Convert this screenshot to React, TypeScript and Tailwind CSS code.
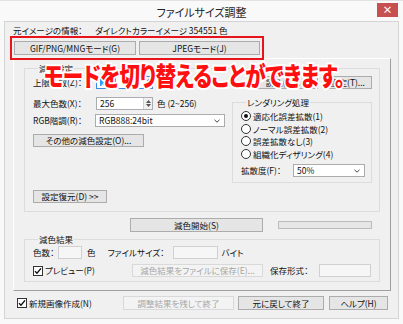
import type { ReactNode } from "react";

function Btn({ children, className = "", disabled = false }: { children: ReactNode; className?: string; disabled?: boolean }) {
  return (
    <div
      className={`flex h-[13px] items-center justify-center border ${
        disabled ? "border-[#d9d9d9] bg-[#f3f3f3] text-[#a6a6a6]" : "border-[#acacac] bg-[#e5e5e5] text-[#111]"
      } ${className}`}
    >
      {children}
    </div>
  );
}

function Box({ className = "" }: { className?: string }) {
  return <div className={`h-[13px] border border-[#d0d0d0] bg-[#f6f6f6] ${className}`} />;
}

function Check() {
  return (
    <div className="flex h-[10px] w-[10px] items-center justify-center border border-[#333] bg-white">
      <svg width="8" height="8" viewBox="0 0 8 8">
        <path d="M1 4.2 L3 6.3 L7 1.4" fill="none" stroke="#111" strokeWidth="1.4" />
      </svg>
    </div>
  );
}

function Radio({ label, on = false }: { label: string; on?: boolean }) {
  return (
    <div className="flex h-[12.5px] items-center gap-[2px]">
      <div className="flex h-[10px] w-[10px] items-center justify-center rounded-full border border-[#333] bg-white">
        {on && <div className="h-[4px] w-[4px] rounded-full bg-[#111]" />}
      </div>
      <span>{label}</span>
    </div>
  );
}

function Select({ value, className = "" }: { value: string; className?: string }) {
  return (
    <div className={`flex h-[13px] items-center justify-between border border-[#acacac] bg-white pl-[3px] pr-[4px] ${className}`}>
      <span>{value}</span>
      <svg width="6" height="4" viewBox="0 0 6 4">
        <path d="M0.5 0.8 L3 3.2 L5.5 0.8" fill="none" stroke="#444" strokeWidth="1" />
      </svg>
    </div>
  );
}

function Spin({ value, className = "", focused = false }: { value: string; className?: string; focused?: boolean }) {
  return (
    <div className={`flex h-[13px] items-center justify-between border bg-white pl-[3px] ${focused ? "border-[#3c8be0]" : "border-[#abadb3]"} ${className}`}>
      {focused ? <span className="bg-[#3399ff] px-[1px] text-white">{value}</span> : <span>{value}</span>}
      <div className="flex h-full w-[9px] flex-col items-center justify-center gap-[1px] border-l border-[#d0d0d0] bg-[#f0f0f0]">
        <svg width="5" height="3" viewBox="0 0 5 3"><path d="M0 3 L2.5 0 L5 3 Z" fill="#555" /></svg>
        <svg width="5" height="3" viewBox="0 0 5 3"><path d="M0 0 L2.5 3 L5 0 Z" fill="#555" /></svg>
      </div>
    </div>
  );
}

function Group({ title, className = "", children }: { title: string; className?: string; children: ReactNode }) {
  return (
    <div className={`border border-[#dcdcdc] ${className}`}>
      <div className="-mt-[7px] ml-[5px] w-fit bg-[#f0f0f0] px-[1px] leading-[12px]">{title}</div>
      {children}
    </div>
  );
}

export default function App() {
  return (
    <div className="relative flex h-[324px] w-[403px] flex-col border-t border-[#e2e2e2] bg-[#f9f9f9] font-['Noto_Sans_CJK_JP','Noto_Sans',sans-serif] text-[8.5px] leading-none text-[#111] [font-feature-settings:'palt']">
      {/* title bar */}
      <div className="relative h-[20px]">
        <div className="pt-[6px] text-center text-[11px] text-[#222]">ファイルサイズ調整</div>
        <div className="absolute right-[5px] top-[2px] flex h-[14px] w-[21px] items-center justify-center bg-[#c75050] text-[10px] font-bold text-white">
          ×
        </div>
      </div>

      {/* client */}
      <div className="mx-[4px] flex h-[298px] flex-col border border-[#d4d4d4] bg-[#f0f0f0]">
        <div className="flex h-[14px] items-center pl-[8px] pt-[2px]">
          <span className="w-[82px]">元イメージの情報：</span>
          <span>ダイレクトカラーイメージ 354551 色</span>
        </div>

        <div className="relative z-10 ml-[5px] flex h-[24px] w-[254px] gap-[3px] border-2 border-[#e8141b] pl-[2px] pt-[3px]">
          <Btn className="h-[14px] w-[122px] border-[#3c7fb1] bg-[#cde6f9]">GIF/PNG/MNGモード(G)</Btn>
          <Btn className="h-[14px] w-[121px]">JPEGモード(J)</Btn>
        </div>

        {/* panel */}
        <div className="-mt-[2px] ml-[8px] flex h-[233px] w-[378px] flex-col border border-b-[#a0a0a0] border-l-white border-r-[#a0a0a0] border-t-white pl-[10px] pr-[10px]">
          <Group title="減色設定" className="mt-[9px] flex h-[144px] flex-col pl-[8px] pr-[7px]">
            <div className="mt-[1px] flex h-[14px] items-center">
              <span className="w-[63px]">上限色数(Z)：</span>
              <Spin value="256" focused className="w-[57px]" />
              <div className="flex-1" />
              <Btn className="w-[70px]">読込(L)...</Btn>
              <Btn className="ml-[5px] w-[49px]">設定(T)...</Btn>
            </div>
            <div className="flex">
              <div className="flex w-[199px] flex-col">
                <div className="mt-[8px] flex h-[12px] items-center">
                  <span className="w-[63px]">最大色数(X)：</span>
                  <Spin value="256" className="w-[57px]" />
                  <span className="ml-[4px]">色 (2~256)</span>
                </div>
                <div className="mt-[5px] flex h-[13px] items-center">
                  <span className="w-[62px]">RGB階調(R)：</span>
                  <Select value="RGB888:24bit" className="w-[130px]" />
                </div>
                <Btn className="mt-[7px] w-[111px]">その他の減色設定(O)...</Btn>
                <Btn className="mt-[43px] w-[74px]">設定復元(D) &gt;&gt;</Btn>
              </div>
              <Group title="レンダリング処理" className="mt-[13px] h-[81px] flex-1 pl-[8px]">
                <div className="mt-[2px] flex flex-col">
                  <Radio label="適応化誤差拡散(1)" on />
                  <Radio label="ノーマル誤差拡散(2)" />
                  <Radio label="誤差拡散なし(3)" />
                  <Radio label="組織化ディザリング(4)" />
                </div>
                <div className="mt-[4px] flex h-[13px] items-center">
                  <span className="w-[52px]">拡散度(F)：</span>
                  <Select value="50%" className="w-[72px]" />
                </div>
              </Group>
            </div>
          </Group>

          <div className="mt-[6px] flex h-[14px] items-center">
            <Btn className="ml-[106px] h-[14px] w-[133px]">減色開始(S)</Btn>
            <div className="ml-[15px] h-[8px] w-[94px] border border-[#bcbcbc] bg-[#e6e6e6]" />
          </div>

          <Group title="減色結果" className="mt-[7px] flex h-[43px] flex-col pl-[8px] pr-[6px]">
            <div className="mt-[1px] flex h-[13px] items-center">
              <span className="w-[25px]">色数：</span>
              <Box className="w-[24px]" />
              <span className="ml-[5px]">色</span>
              <span className="ml-[12px] w-[65px]">ファイルサイズ：</span>
              <Box className="w-[45px]" />
              <span className="ml-[4px]">バイト</span>
            </div>
            <div className="mt-[5px] flex h-[13px] items-center">
              <Check />
              <span className="ml-[2px] w-[87px]">プレビュー(P)</span>
              <Btn disabled className="w-[131px]">減色結果をファイルに保存(E)...</Btn>
              <span className="ml-[7px] w-[49px]">保存形式：</span>
              <Box className="w-[52px]" />
            </div>
          </Group>
        </div>

        <div className="mt-[5px] flex h-[14px] items-center pl-[12px]">
          <Check />
          <span className="ml-[2px] w-[94px]">新規画像作成(N)</span>
          <Btn disabled className="h-[14px] w-[111px]">調整結果を残して終了</Btn>
          <Btn className="ml-[4px] h-[14px] w-[86px]">元に戻して終了</Btn>
          <Btn className="ml-[5px] h-[14px] w-[59px]">ヘルプ(H)</Btn>
        </div>
      </div>

      {/* annotation */}
      <div className="pointer-events-none absolute left-[44px] top-[61px] z-20 origin-left scale-x-[0.79] whitespace-nowrap text-[26px] font-black leading-none tracking-[-0.5px] text-[#ff1010] [-webkit-text-stroke:4px_white] [paint-order:stroke_fill]">
        モードを切り替えることができます。
      </div>
    </div>
  );
}
